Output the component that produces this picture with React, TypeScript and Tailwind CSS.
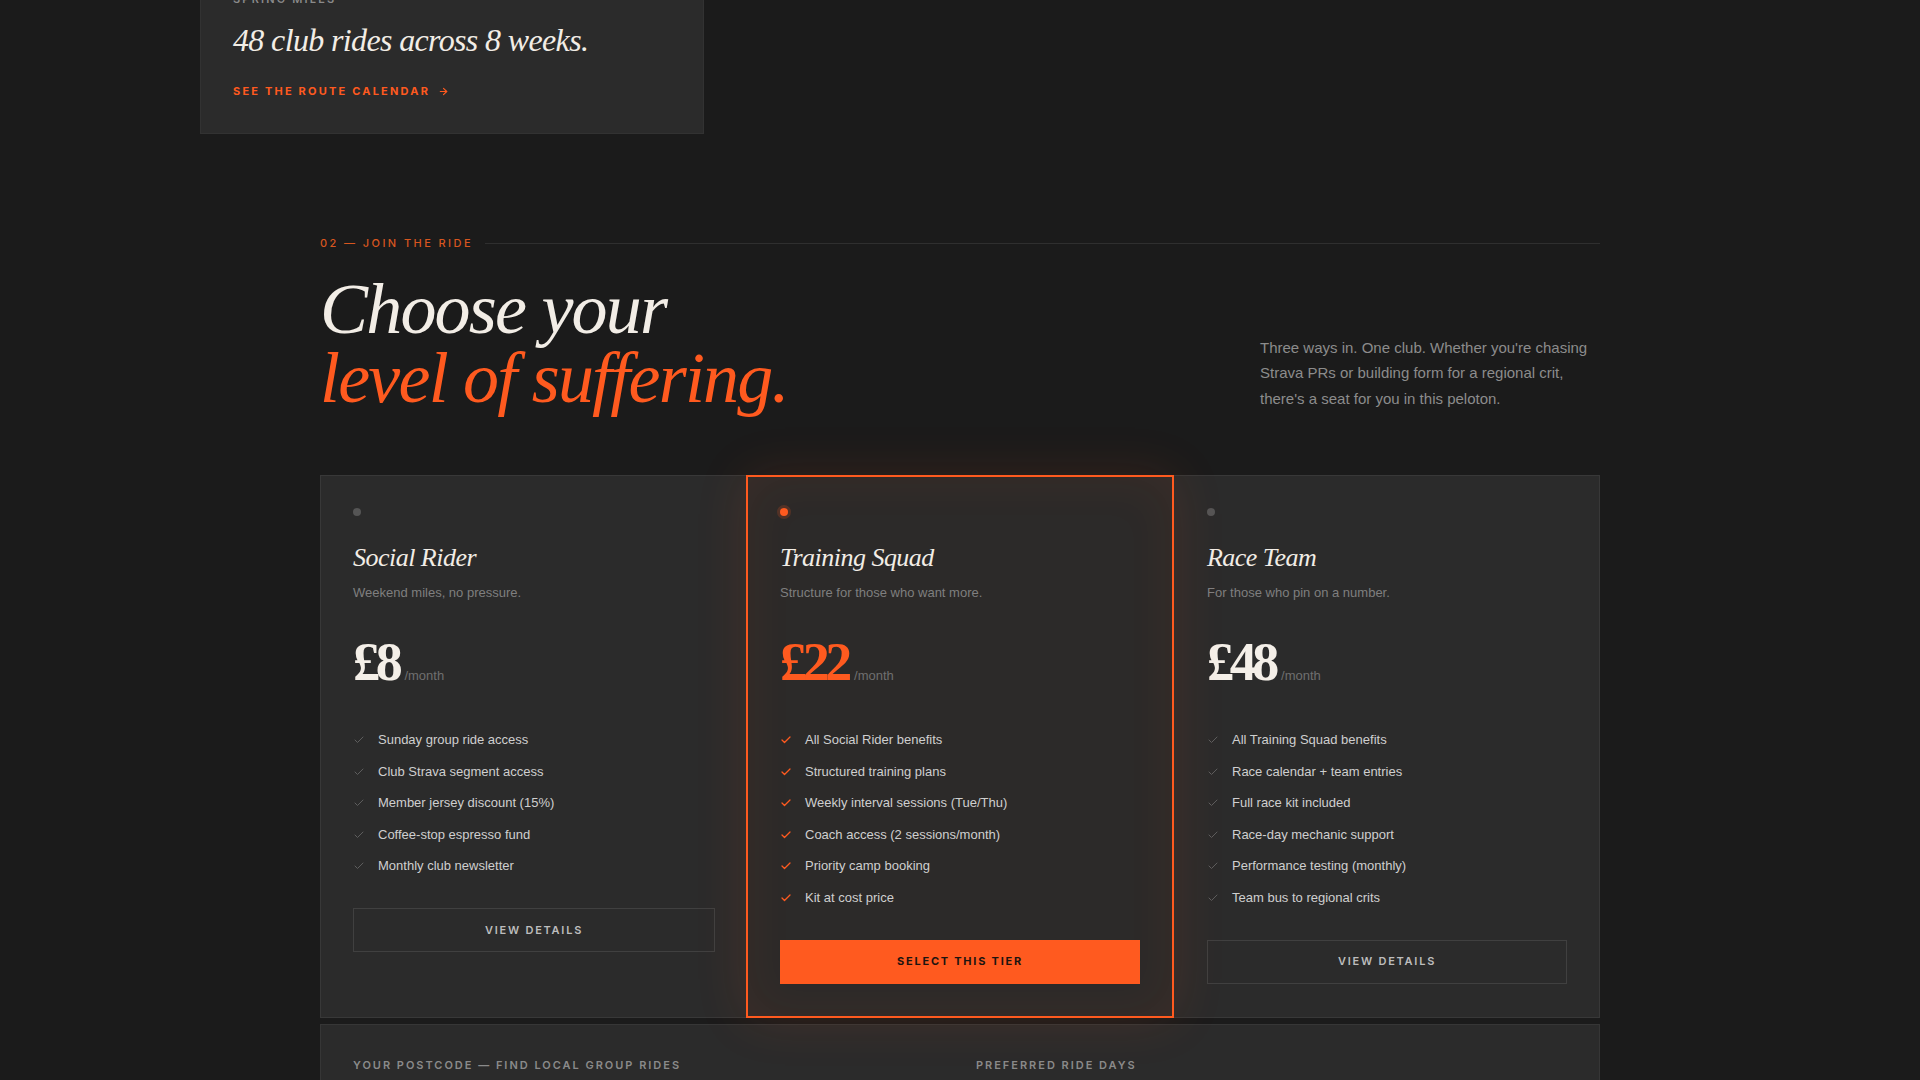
import React from "react";
import { Check, ArrowRight } from "lucide-react";

const serif = { fontFamily: '"Liberation Serif", "DejaVu Serif", serif' };

type Tier = {
  name: string;
  sub: string;
  price: string;
  features: string[];
  featured?: boolean;
  cta: string;
};

const tiers: Tier[] = [
  {
    name: "Social Rider",
    sub: "Weekend miles, no pressure.",
    price: "£8",
    features: [
      "Sunday group ride access",
      "Club Strava segment access",
      "Member jersey discount (15%)",
      "Coffee-stop espresso fund",
      "Monthly club newsletter",
    ],
    cta: "VIEW DETAILS",
  },
  {
    name: "Training Squad",
    sub: "Structure for those who want more.",
    price: "£22",
    features: [
      "All Social Rider benefits",
      "Structured training plans",
      "Weekly interval sessions (Tue/Thu)",
      "Coach access (2 sessions/month)",
      "Priority camp booking",
      "Kit at cost price",
    ],
    featured: true,
    cta: "SELECT THIS TIER",
  },
  {
    name: "Race Team",
    sub: "For those who pin on a number.",
    price: "£48",
    features: [
      "All Training Squad benefits",
      "Race calendar + team entries",
      "Full race kit included",
      "Race-day mechanic support",
      "Performance testing (monthly)",
      "Team bus to regional crits",
    ],
    cta: "VIEW DETAILS",
  },
];

function TierCard({ t, last }: { t: Tier; last?: boolean }) {
  return (
    <div
      className={
        t.featured
          ? "relative z-10 -mx-px -my-px flex flex-col border-2 border-[#ff5a1f] bg-[#2c2a29] px-8 pt-[31px] pb-8 shadow-[0_0_50px_rgba(255,90,31,0.12),inset_0_0_50px_rgba(255,90,31,0.07)]"
          : last
          ? "flex flex-col bg-[#2b2b2b] pl-[34px] pr-8 pt-8 pb-8"
          : "flex flex-col bg-[#2b2b2b] px-8 pt-8 pb-8"
      }
    >
      <div
        className={
          t.featured
            ? "h-2 w-2 rounded-full bg-[#ff5a1f] shadow-[0_0_0_3px_rgba(255,90,31,0.18)]"
            : "h-2 w-2 rounded-full bg-[#555555]"
        }
      />
      <h3
        className="mt-[25px] text-[26px] leading-[34px] italic tracking-[-0.02em] text-[#f2ede6]"
        style={serif}
      >
        {t.name}
      </h3>
      <p className="mt-2 text-[13px] leading-5 text-[#7f7f7f]">{t.sub}</p>
      <div className="mt-[32px] flex items-baseline">
        <span
          className={
            t.featured
              ? "text-[54px] leading-none font-bold tracking-[-0.08em] text-[#ff5a1f]"
              : "text-[54px] leading-none font-bold tracking-[-0.08em] text-[#f4efe8]"
          }
          style={serif}
        >
          {t.price}
        </span>
        <span className="ml-[6px] text-[13px] text-[#6f6f6f]">/month</span>
      </div>
      <ul className="mt-[41px] flex flex-col gap-[11.5px]">
        {t.features.map((f) => (
          <li key={f} className="flex items-center gap-[13px] text-[13px] leading-5 text-[#cfcfcf]">
            <Check
              size={12}
              strokeWidth={t.featured ? 2.6 : 2}
              className={t.featured ? "shrink-0 text-[#ff5a1f]" : "shrink-0 text-[#5e5e5e]"}
            />
            <span>{f}</span>
          </li>
        ))}
      </ul>
      <button
        className={
          t.featured
            ? "mt-8 flex h-11 w-full items-center justify-center bg-[#ff5a1f] text-[11px] font-bold tracking-[0.16em] text-[#1c1410]"
            : "mt-8 flex h-11 w-full items-center justify-center border border-[#404040] text-[11px] font-semibold tracking-[0.16em] text-[#bdbdbd]"
        }
        style={{ fontFamily: 'Inter, "Liberation Sans", sans-serif' }}
      >
        {t.cta}
      </button>
    </div>
  );
}

export default function App() {
  const label = { fontFamily: 'Inter, "Liberation Sans", sans-serif' };
  return (
    <div
      className="h-screen overflow-hidden bg-[#1b1b1b]"
      style={{ fontFamily: '"Liberation Sans", Arial, sans-serif' }}
    >
      <div className="-mt-[42px] pl-[200px]">
        <div className="w-[504px] border border-[#323232] bg-[#2b2b2b] px-8 pt-8 pb-[34px]">
          <div className="text-[11px] leading-4 font-semibold tracking-[0.2em] text-[#8a8a8a]" style={label}>
            SPRING MILES
          </div>
          <div
            className="mt-3.5 text-[32px] leading-[1.2] italic tracking-[-0.02em] text-[#f2ede6]"
            style={serif}
          >
            48 club rides across 8 weeks.
          </div>
          <a
            className="mt-6 flex items-center gap-2 text-[11px] leading-4 font-bold tracking-[0.2em] text-[#ff5a1f]"
            style={label}
          >
            SEE THE ROUTE CALENDAR
            <ArrowRight size={11} strokeWidth={2.5} />
          </a>
        </div>
      </div>

      <section className="mx-auto w-[1280px] pt-[101px]">
        <div className="flex items-center">
          <span className="text-[11px] leading-4 font-medium tracking-[0.22em] text-[#d8561f]" style={label}>
            02 — JOIN THE RIDE
          </span>
          <div className="ml-3 h-px flex-1 bg-[#2f2f2f]" />
        </div>

        <div className="mt-6 flex items-end justify-between">
          <h2
            className="text-[72px] leading-[0.95] italic tracking-[-0.025em]"
            style={serif}
          >
            <span className="block text-[#f2ede6]">Choose your</span>
            <span className="block text-[#ff5a1f]">level of suffering.</span>
          </h2>
          <p className="-mt-px w-[340px] pb-px text-[15px] leading-[1.7] text-[#8c8c8c]">
            Three ways in. One club. Whether you're chasing Strava PRs or building form for a regional crit,
            there's a seat for you in this peloton.
          </p>
        </div>

        <div className="mt-[63px] grid grid-cols-3 border border-[#383838] bg-[#2b2b2b]">
          {tiers.map((t, i) => (
            <TierCard key={t.name} t={t} last={i === 2} />
          ))}
        </div>

        <div className="mt-[6px] border border-[#363636] bg-[#2b2b2b] px-8 pt-8 pb-8">
          <div className="grid grid-cols-2 gap-8">
            <div>
              <div className="text-[11px] leading-4 font-semibold tracking-[0.18em] text-[#8a8a8a]" style={label}>
                YOUR POSTCODE — FIND LOCAL GROUP RIDES
              </div>
              <div className="mt-3 h-11 border border-[#404040] bg-[#222222]" />
            </div>
            <div>
              <div className="text-[11px] leading-4 font-semibold tracking-[0.18em] text-[#8a8a8a]" style={label}>
                PREFERRED RIDE DAYS
              </div>
              <div className="mt-3 flex gap-2">
                {["MON", "TUE", "WED", "THU", "FRI", "SAT", "SUN"].map((d) => (
                  <div key={d} className="h-11 w-14 border border-[#404040]" />
                ))}
              </div>
            </div>
          </div>
        </div>
      </section>
    </div>
  );
}
